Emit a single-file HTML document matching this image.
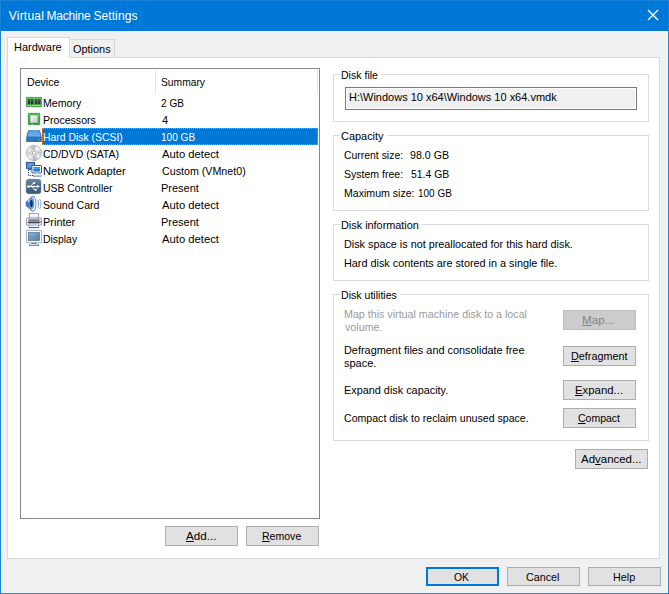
<!DOCTYPE html>
<html><head><meta charset="utf-8"><title>Virtual Machine Settings</title>
<style>
html,body{margin:0;padding:0;}
body{width:669px;height:594px;overflow:hidden;background:#f0f0f0;position:relative;font-family:"Liberation Sans",sans-serif;font-size:11px;color:#000;}
.abs{position:absolute;}
.t{position:absolute;display:block;white-space:nowrap;line-height:13px;height:13px;transform-origin:0 0;}
.t u{text-decoration:underline;text-underline-offset:1px;}
.btn{position:absolute;box-sizing:border-box;border:1px solid #adadad;background:#e1e1e1;width:73px;height:20px;}
.btn.dis{border-color:#bfbfbf;background:#cccccc;}
.btn.def{border:2px solid #0078d7;}
.grp{position:absolute;box-sizing:border-box;border:1px solid #dcdcdc;left:333px;width:316px;}
.gap{position:absolute;background:#fff;height:1px;left:340px;}
svg{position:absolute;overflow:visible;}
</style></head><body>
<!-- window frame -->
<div class="abs" style="left:0;top:0;width:667px;height:592px;border:1px solid #1983d9;"></div>
<div class="abs" style="left:1px;top:1px;width:667px;height:30px;background:#0078d7;"></div>
<div class="abs" style="left:1px;top:31px;width:665px;height:560px;border:1px solid #f8f6f2;"></div>
<svg style="left:648px;top:10px" width="10" height="10" viewBox="0 0 10 10"><path d="M0 0 L10 10 M10 0 L0 10" stroke="#fff" stroke-width="1.35" fill="none"/></svg>

<!-- tab page -->
<div class="abs" style="left:7px;top:57px;width:651px;height:500px;border:1px solid #d9d9d9;background:#fff;"></div>
<!-- tabs -->
<div class="abs" style="left:69px;top:39px;width:44px;height:17px;border:1px solid #d9d9d9;border-bottom:none;background:#f0f0f0;"></div>
<div class="abs" style="left:7px;top:37px;width:61px;height:20px;border:1px solid #d9d9d9;border-bottom:none;background:#fff;"></div>

<!-- device list -->
<div class="abs" style="left:20px;top:68px;width:298px;height:449px;border:1px solid #828790;background:#fff;"></div>
<div class="abs" style="left:155px;top:70px;width:1px;height:24px;background:#e5e5e5;"></div>
<div class="abs" style="left:317px;top:70px;width:1px;height:24px;background:#e5e5e5;"></div>
<div class="abs" style="left:42px;top:128px;width:276px;height:17px;background:#0078d7;box-sizing:border-box;border:1px dotted #ff8728;"></div>

<!-- Memory -->
<svg style="left:26px;top:97px" width="16" height="10" viewBox="0 0 16 10">
<defs><linearGradient id="gm" x1="0" y1="0" x2="0" y2="1"><stop offset="0" stop-color="#6fce6f"/><stop offset="0.25" stop-color="#44ad48"/><stop offset="1" stop-color="#2c9734"/></linearGradient>
<linearGradient id="gmc" x1="0" y1="0" x2="0" y2="1"><stop offset="0" stop-color="#5c5262"/><stop offset="1" stop-color="#2b2230"/></linearGradient></defs>
<path d="M0.4 0.3 H15.6 V2.4 H14.9 V3.8 H15.6 V9.8 H5.1 V8.6 H4 V9.8 H0.4 V3.8 H1.1 V2.4 H0.4 Z" fill="url(#gm)" stroke="#25882c" stroke-width="0.6"/>
<rect x="2" y="2" width="2.3" height="4.8" fill="url(#gmc)"/><rect x="5" y="2" width="2.3" height="4.8" fill="url(#gmc)"/>
<rect x="9.1" y="2" width="2.3" height="4.8" fill="url(#gmc)"/><rect x="12.1" y="2" width="2.3" height="4.8" fill="url(#gmc)"/>
<rect x="1.2" y="7.9" width="2.6" height="1.1" fill="#f3c04a"/><rect x="5.3" y="7.9" width="9.7" height="1.1" fill="#f3c04a"/>
</svg>
<!-- Processor -->
<svg style="left:28px;top:113px" width="12" height="12" viewBox="0 0 12 12">
<defs><linearGradient id="gp" x1="0" y1="0" x2="0" y2="1"><stop offset="0" stop-color="#4cb850"/><stop offset="1" stop-color="#2a9230"/></linearGradient>
<linearGradient id="gp2" x1="0" y1="0" x2="1" y2="1"><stop offset="0" stop-color="#ffffff"/><stop offset="1" stop-color="#c2c2c8"/></linearGradient></defs>
<path d="M0.3 0.3 H11.7 V11.7 H5.3 V10.9 H3.3 V11.7 H0.3 Z" fill="url(#gp)" stroke="#1f8428" stroke-width="0.6"/>
<rect x="2.3" y="2.3" width="7.4" height="7.4" fill="url(#gp2)" stroke="#a8d8aa" stroke-width="0.5"/>
<circle cx="1.4" cy="1.4" r="0.45" fill="#e8ffe8"/><circle cx="10.6" cy="1.4" r="0.45" fill="#e8ffe8"/><circle cx="1.4" cy="10.6" r="0.45" fill="#e8ffe8"/><circle cx="10.6" cy="10.6" r="0.45" fill="#e8ffe8"/>
</svg>
<!-- Hard disk -->
<svg style="left:26px;top:130px" width="16" height="12" viewBox="0 0 16 12">
<defs><linearGradient id="gh" x1="0" y1="0" x2="0" y2="1"><stop offset="0" stop-color="#5b9fdc"/><stop offset="1" stop-color="#6fb0e8"/></linearGradient>
<linearGradient id="gh2" x1="0" y1="0" x2="0" y2="1"><stop offset="0" stop-color="#2a6cb4"/><stop offset="0.2" stop-color="#3076be"/><stop offset="1" stop-color="#2664aa"/></linearGradient></defs>
<path d="M2.1 0.3 H13.9 L15.8 7 H0.2 Z" fill="#2f76c0"/>
<path d="M2.9 1.1 H13.1 L14.6 6.6 H1.4 Z" fill="url(#gh)"/>
<rect x="0.2" y="7" width="15.6" height="4.9" fill="url(#gh2)"/>
<rect x="1.6" y="8.8" width="5.6" height="1.7" fill="#3f80c6"/>
<rect x="11.9" y="8.9" width="1.5" height="1.5" fill="#4fd29a"/>
</svg>
<!-- CD -->
<div class="abs" style="left:26px;top:145px;width:16px;height:16px;border-radius:50%;background:radial-gradient(circle at 50% 50%,#fff 0,#fff 1px,#a6aab2 1.5px,#e6e7ea 2.1px,#e2e4e8 2.7px,#b2b6be 3.2px,rgba(178,182,190,0) 3.8px),conic-gradient(from 35deg,#fdfdfd,#c3c7ce 50deg,#eff0f2 95deg,#aeb2ba 140deg,#f8f8f9 185deg,#cfd2d8 230deg,#f0f1f3 275deg,#b4b8c0 320deg,#fdfdfd 360deg);box-shadow:inset 0 0 0 0.7px #a4a8b0;"></div>
<!-- Network -->
<svg style="left:26px;top:162px" width="16" height="15" viewBox="0 0 16 15">
<defs><linearGradient id="gn" x1="0" y1="0" x2="0" y2="1"><stop offset="0" stop-color="#1f8af4"/><stop offset="0.45" stop-color="#58b0ff"/><stop offset="0.55" stop-color="#1480ee"/><stop offset="1" stop-color="#0f78e6"/></linearGradient></defs>
<rect x="0.5" y="0.4" width="8" height="6" fill="#4a8fd8" stroke="#2f5d8c" stroke-width="1"/>
<rect x="1.6" y="1.5" width="5.8" height="3.8" fill="#5a9ce0"/>
<rect x="2.2" y="7" width="3.2" height="1" fill="#2f5d8c"/>
<path d="M2.5 8 V13.5 H7.2" fill="none" stroke="#143c78" stroke-width="1" stroke-dasharray="1 0.8"/>
<rect x="5.9" y="3.5" width="9.6" height="7.5" rx="0.6" fill="#fafcfe" stroke="#2c5688" stroke-width="1"/>
<rect x="7.4" y="5" width="6.6" height="4.5" fill="url(#gn)"/>
<path d="M9.4 11.3 H12.2 L12.8 13.2 H8.8 Z" fill="#dce8f6"/>
<rect x="7" y="13.3" width="8.4" height="1.2" fill="#34608f"/>
<rect x="7.6" y="13.3" width="7.2" height="0.6" fill="#e8f0f8"/>
</svg>
<!-- USB -->
<svg style="left:26px;top:179px" width="16" height="16" viewBox="0 0 16 16">
<defs><linearGradient id="gu" x1="0" y1="0" x2="0" y2="1"><stop offset="0" stop-color="#6484a2"/><stop offset="0.5" stop-color="#4e6b8a"/><stop offset="1" stop-color="#3c5774"/></linearGradient></defs>
<rect x="0.2" y="0.3" width="14.7" height="14.4" rx="2.4" fill="url(#gu)" stroke="#3a546f" stroke-width="0.4"/>
<path d="M2.4 7.5 H12" stroke="#fff" stroke-width="1.2" fill="none"/>
<path d="M11.2 5.7 L13.8 7.5 L11.2 9.3 Z" fill="#fff"/>
<circle cx="2.5" cy="7.5" r="1.25" fill="#fff"/>
<path d="M4.8 7.5 L7 4.3 H8" stroke="#fff" stroke-width="0.9" fill="none"/>
<circle cx="8.3" cy="4.1" r="1.05" fill="#fff"/>
<path d="M6.2 7.5 L8.4 10.7 H9.2" stroke="#fff" stroke-width="0.9" fill="none"/>
<rect x="8.8" y="9.8" width="1.9" height="1.9" fill="#fff"/>
</svg>
<!-- Sound -->
<svg style="left:25px;top:196px" width="17" height="16" viewBox="0 0 17 16">
<defs><linearGradient id="gs" x1="0" y1="0" x2="1" y2="0"><stop offset="0" stop-color="#1d5cb4"/><stop offset="0.5" stop-color="#4a8ad8"/><stop offset="1" stop-color="#9ccaf4"/></linearGradient>
<linearGradient id="gs2" x1="0" y1="0" x2="1" y2="0.4"><stop offset="0" stop-color="#7db4ee"/><stop offset="0.6" stop-color="#d4e9fc"/><stop offset="1" stop-color="#ffffff"/></linearGradient></defs>
<path d="M1.1 5.8 L6.6 0.8 L6.6 14.8 L1.1 9.8 Z" fill="url(#gs)" stroke="#2a5ea6" stroke-width="0.5"/>
<path d="M1.8 5.6 L5 2.8 L4.2 6.6 Z" fill="#cfe6fb" opacity="0.8"/>
<ellipse cx="8" cy="7.8" rx="3" ry="7.6" fill="url(#gs2)" stroke="#2f60a2" stroke-width="0.7"/>
<ellipse cx="7.1" cy="7.6" rx="2.1" ry="5.3" fill="#5b98de"/>
<ellipse cx="6.4" cy="7.4" rx="1.25" ry="3.5" fill="#14233f"/>
<path d="M12.7 3.6 C13.9 6 13.9 9.8 12.7 12.4" fill="none" stroke="#5b84c8" stroke-width="0.75"/>
<path d="M14.7 2.8 C16.2 5.8 16.2 10.2 14.7 13" fill="none" stroke="#6f94d0" stroke-width="0.75"/>
</svg>
<!-- Printer -->
<svg style="left:26px;top:213px" width="16" height="16" viewBox="0 0 16 16">
<defs><linearGradient id="gpr" x1="0" y1="0" x2="0" y2="1"><stop offset="0" stop-color="#ffffff"/><stop offset="1" stop-color="#e6e6ee"/></linearGradient></defs>
<rect x="3.2" y="0.6" width="9.4" height="5.4" fill="url(#gpr)" stroke="#7d7898" stroke-width="0.7"/>
<rect x="0.4" y="5.1" width="15.2" height="7.2" rx="1.1" fill="#f1f0f8" stroke="#6d6888" stroke-width="0.7"/>
<rect x="2.4" y="6.4" width="11.2" height="2.3" fill="#74747f"/>
<rect x="1.6" y="9" width="12.8" height="0.9" fill="#26262c"/>
<rect x="14" y="8" width="1" height="1" fill="#3fd04a"/>
<rect x="3.2" y="10.2" width="9.4" height="4.6" fill="#fafaff" stroke="#7d7898" stroke-width="0.7"/>
<rect x="4.4" y="11.2" width="7" height="1.8" fill="#b4c8e2"/>
<rect x="3" y="14.2" width="9.8" height="0.8" fill="#4a4570"/>
</svg>
<!-- Display -->
<svg style="left:26px;top:230px" width="16" height="16" viewBox="0 0 16 16">
<defs><linearGradient id="gd" x1="0" y1="0" x2="1" y2="1"><stop offset="0" stop-color="#94b4d8"/><stop offset="1" stop-color="#5479a2"/></linearGradient></defs>
<rect x="0.4" y="0.4" width="15.2" height="12.3" rx="0.5" fill="#fbfcfe" stroke="#8299b6" stroke-width="0.8"/>
<rect x="2.4" y="2.5" width="11.2" height="8" fill="url(#gd)" stroke="#4e7096" stroke-width="0.7"/>
<rect x="5.2" y="13" width="5.6" height="1" fill="#557699"/>
<rect x="3" y="14" width="10" height="1.9" fill="#54759a"/>
<rect x="3.9" y="14" width="8.2" height="1.1" fill="#dfe8f2"/>
</svg>


<div class="btn" style="left:165px;top:526px;"></div>
<div class="btn" style="left:246px;top:526px;"></div>

<!-- group boxes -->
<div class="grp" style="top:74px;height:48px;"></div><div class="gap" style="top:74px;width:41px;"></div>
<div class="abs" style="left:345px;top:87px;width:288px;height:19px;border:1px solid #7a7a7a;outline:0;background:#f0f0f0;box-shadow:inset 0 0 0 1px #fff;padding:1px;"></div>
<div class="grp" style="top:135px;height:76px;"></div><div class="gap" style="top:135px;width:47px;"></div>
<div class="grp" style="top:224px;height:57px;"></div><div class="gap" style="top:224px;width:81px;"></div>
<div class="grp" style="top:294px;height:147px;"></div><div class="gap" style="top:294px;width:60px;"></div>

<div class="btn dis" style="left:563px;top:310px;"></div>
<div class="btn" style="left:563px;top:346px;"></div>
<div class="btn" style="left:563px;top:380px;"></div>
<div class="btn" style="left:563px;top:408px;"></div>
<div class="btn" style="left:575px;top:449px;"></div>

<div class="btn def" style="left:426px;top:567px;height:19px;"></div>
<div class="btn" style="left:507px;top:567px;height:19px;"></div>
<div class="btn" style="left:588px;top:567px;height:19px;"></div>

<div><span class="t" id="title1" style="left:8.76px;top:9px;font-size:12px;line-height:14px;height:14px;color:#fff;letter-spacing:0.212px">Virtual</span> <span class="t" id="title2" style="left:46.50px;top:9px;font-size:12px;line-height:14px;height:14px;color:#fff;letter-spacing:-0.213px">Machine</span> <span class="t" id="title3" style="left:93.39px;top:9px;font-size:12px;line-height:14px;height:14px;color:#fff;letter-spacing:0.098px">Settings</span></div>
<div><span class="t" id="hw" style="left:14.00px;top:41px;transform:scaleX(1.0000)">Hardware</span></div>
<div><span class="t" id="opt" style="left:73.01px;top:43px;transform:scaleX(0.9927)">Options</span></div>
<div><span class="t" id="dev" style="left:26.57px;top:76px;transform:scaleX(0.9609)">Device</span></div>
<div><span class="t" id="sum" style="left:161.24px;top:76px;transform:scaleX(0.9343)">Summary</span></div>
<div><span class="t" id="d1" style="left:42.78px;top:97px;transform:scaleX(0.9623)">Memory</span></div>
<div><span class="t" id="d2" style="left:42.91px;top:114px;transform:scaleX(0.9601)">Processors</span></div>
<div><span class="t" id="d3" style="left:42.80px;top:131px;color:#fff;transform:scaleX(0.9455)">Hard Disk (SCSI)</span></div>
<div><span class="t" id="d4" style="left:43.38px;top:148px;transform:scaleX(0.9538)">CD/DVD (SATA)</span></div>
<div><span class="t" id="d5" style="left:42.71px;top:165px;transform:scaleX(1.0168)">Network Adapter</span></div>
<div><span class="t" id="d6" style="left:42.92px;top:182px;transform:scaleX(0.9471)">USB Controller</span></div>
<div><span class="t" id="d7" style="left:43.34px;top:199px;transform:scaleX(0.9609)">Sound Card</span></div>
<div><span class="t" id="d8" style="left:43.05px;top:216px;transform:scaleX(0.9960)">Printer</span></div>
<div><span class="t" id="d9" style="left:42.90px;top:233px;transform:scaleX(0.9454)">Display</span></div>
<div><span class="t" id="s1" style="left:161.21px;top:97px;transform:scaleX(0.9141)">2 GB</span></div>
<div><span class="t" id="s2" style="left:161.71px;top:114px;transform:scaleX(1.0068)">4</span></div>
<div><span class="t" id="s3" style="left:161.00px;top:131px;color:#fff;transform:scaleX(0.9166)">100 GB</span></div>
<div><span class="t" id="s4" style="left:161.68px;top:148px;transform:scaleX(1.0224)">Auto detect</span></div>
<div><span class="t" id="s5" style="left:161.91px;top:165px;transform:scaleX(0.9709)">Custom (VMnet0)</span></div>
<div><span class="t" id="s6" style="left:161.00px;top:182px;transform:scaleX(1.0000)">Present</span></div>
<div><span class="t" id="s7" style="left:161.68px;top:199px;transform:scaleX(1.0224)">Auto detect</span></div>
<div><span class="t" id="s8" style="left:161.00px;top:216px;transform:scaleX(1.0000)">Present</span></div>
<div><span class="t" id="s9" style="left:161.68px;top:233px;transform:scaleX(1.0224)">Auto detect</span></div>
<div><span class="t" id="badd" style="left:186.10px;top:530px;transform:scaleX(1.0560)"><u>A</u>dd...</span></div>
<div><span class="t" id="brem" style="left:262.47px;top:530px;transform:scaleX(0.9577)"><u>R</u>emove</span></div>
<div><span class="t" id="g1" style="left:340.87px;top:69px;transform:scaleX(0.9594)">Disk file</span></div>
<div><span class="t" id="path" style="left:349.33px;top:91px;transform:scaleX(0.9990)">H:\Windows 10 x64\Windows 10 x64.vmdk</span></div>
<div><span class="t" id="g2" style="left:341.32px;top:130px;transform:scaleX(0.9945)">Capacity</span></div>
<div><span class="t" id="c1a" style="left:344.28px;top:149px;transform:scaleX(0.9476)">Current size:</span> <span class="t" id="c1b" style="left:410.43px;top:149px;transform:scaleX(0.9665)">98.0 GB</span></div>
<div><span class="t" id="c2a" style="left:344.40px;top:168px;transform:scaleX(0.9573)">System free:</span> <span class="t" id="c2b" style="left:410.59px;top:168px;transform:scaleX(0.9484)">51.4 GB</span></div>
<div><span class="t" id="c3a" style="left:343.89px;top:187px;transform:scaleX(0.9611)">Maximum size:</span> <span class="t" id="c3b" style="left:417.92px;top:187px;transform:scaleX(0.9067)">100 GB</span></div>
<div><span class="t" id="g3" style="left:340.59px;top:219px;transform:scaleX(0.9870)">Disk information</span></div>
<div><span class="t" id="i1" style="left:343.90px;top:238px;transform:scaleX(0.9823)">Disk space is not preallocated for this hard disk.</span></div>
<div><span class="t" id="i2" style="left:343.91px;top:257px;transform:scaleX(0.9853)">Hard disk contents are stored in a single file.</span></div>
<div><span class="t" id="g4" style="left:340.60px;top:289px;transform:scaleX(0.9620)">Disk utilities</span></div>
<div><span class="t" id="u1a" style="left:343.94px;top:308px;color:#9a9a9a;transform:scaleX(0.9717)">Map this virtual machine disk to a local</span> <span class="t" id="u1b" style="left:344.76px;top:321px;color:#9a9a9a;transform:scaleX(0.9734)">volume.</span></div>
<div><span class="t" id="u2a" style="left:343.79px;top:344px;transform:scaleX(0.9903)">Defragment files and consolidate free</span> <span class="t" id="u2b" style="left:344.00px;top:357px;transform:scaleX(1.0000)">space.</span></div>
<div><span class="t" id="u3" style="left:343.91px;top:384px;transform:scaleX(0.9870)">Expand disk capacity.</span></div>
<div><span class="t" id="u4" style="left:344.45px;top:412px;transform:scaleX(0.9620)">Compact disk to reclaim unused space.</span></div>
<div><span class="t" id="bmap" style="left:582.01px;top:314px;color:#838383;transform:scaleX(1.0602)"><u>M</u>ap...</span></div>
<div><span class="t" id="bdef" style="left:570.60px;top:350px;transform:scaleX(0.9828)"><u>D</u>efragment</span></div>
<div><span class="t" id="bexp" style="left:574.60px;top:384px;transform:scaleX(1.0344)"><u>E</u>xpand...</span></div>
<div><span class="t" id="bcom" style="left:577.80px;top:412px;transform:scaleX(0.9547)"><u>C</u>ompact</span></div>
<div><span class="t" id="badv" style="left:580.75px;top:453px;transform:scaleX(1.0419)">Ad<u>v</u>anced...</span></div>
<div><span class="t" id="bok" style="left:453.62px;top:571px;transform:scaleX(0.9467)">OK</span></div>
<div><span class="t" id="bcan" style="left:525.97px;top:571px;transform:scaleX(0.9731)">Cancel</span></div>
<div><span class="t" id="bhelp" style="left:612.83px;top:571px;transform:scaleX(0.9777)">Help</span></div>
</body></html>
